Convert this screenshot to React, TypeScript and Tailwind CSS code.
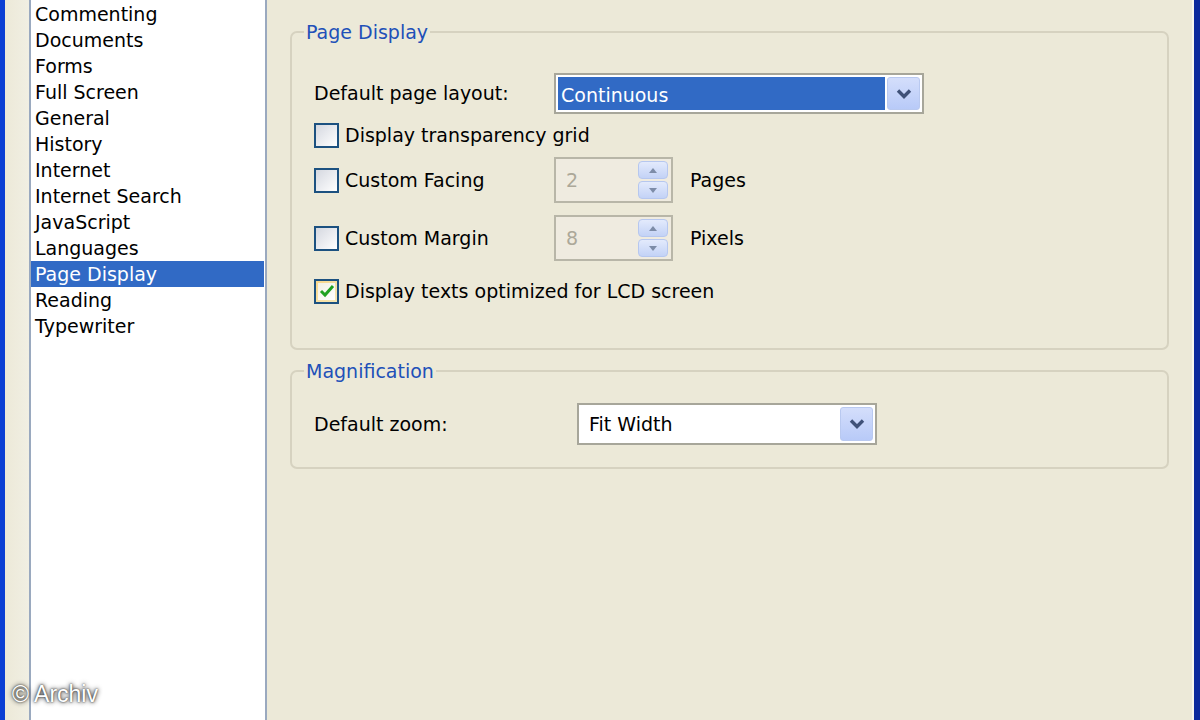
import React from "react";

const items = [
  "Commenting",
  "Documents",
  "Forms",
  "Full Screen",
  "General",
  "History",
  "Internet",
  "Internet Search",
  "JavaScript",
  "Languages",
  "Page Display",
  "Reading",
  "Typewriter",
];

function Chevron() {
  return (
    <svg width="18" height="12" viewBox="0 0 18 12">
      <path d="M3 2.5 L9 8.5 L15 2.5" fill="none" stroke="#3f5178" strokeWidth="3.4" />
    </svg>
  );
}

function DropButton() {
  return (
    <div className="w-[33px] self-stretch my-[2px] mr-[2px] flex items-center justify-center rounded-[3px] border border-[#b9c9f0] bg-gradient-to-b from-[#d4defb] to-[#b8caf8]">
      <Chevron />
    </div>
  );
}

function Checkbox({ checked = false }: { checked?: boolean }) {
  return (
    <div
      className={
        checked
          ? "w-[25px] h-[25px] shrink-0 border-2 border-[#1c5180] bg-gradient-to-br from-[#f8d68a] to-[#f5e7b6] flex items-center justify-center p-[2px]"
          : "w-[25px] h-[25px] shrink-0 border-2 border-[#1c5180] bg-gradient-to-br from-[#d5d8e0] to-white"
      }
    >
      {checked && (
        <div className="w-full h-full bg-gradient-to-br from-[#f2f0e4] to-white flex items-center justify-center">
          <svg width="16" height="14" viewBox="0 0 16 14">
            <path d="M2 7 L6 11 L14 2" fill="none" stroke="#21a121" strokeWidth="3" />
          </svg>
        </div>
      )}
    </div>
  );
}

function SpinArrow({ up }: { up: boolean }) {
  return (
    <div className="flex-1 rounded-[4px] border border-[#b6c7ef] bg-gradient-to-b from-[#e3eafc] to-[#c3d2f6] flex items-center justify-center">
      <svg width="8" height="5" viewBox="0 0 8 5">
        <path d={up ? "M0 5 L4 0 L8 5 Z" : "M0 0 L4 5 L8 0 Z"} fill="#7d8ca8" />
      </svg>
    </div>
  );
}

function Spin({ value }: { value: string }) {
  return (
    <div className="w-[119px] h-[46px] border-2 border-[#b8b6a8] bg-[#efebe0] flex items-stretch">
      <div className="flex-1 pl-[10px] flex items-center text-[#aca899]">{value}</div>
      <div className="w-[30px] flex flex-col gap-[2px] py-[2px] mr-[3px]">
        <SpinArrow up />
        <SpinArrow up={false} />
      </div>
    </div>
  );
}

export default function App() {
  return (
    <div
      className="relative w-[1200px] h-[720px] overflow-hidden bg-[#ece9d8] flex text-black text-[19px]"
      style={{ fontFamily: '"DejaVu Sans", Verdana, sans-serif' }}
    >
      <div className="w-[5px] bg-[#0b3fd4]" />
      <div className="w-[24px] bg-gradient-to-r from-[#ece9d8] to-[#f1efe3]" />
      <div className="w-[238px] bg-white border-x-2 border-[#9aa9bf] pt-[1px]">
        {items.map((it) => (
          <div
            key={it}
            className={
              it === "Page Display"
                ? "h-[26px] leading-[26px] pl-[4px] mr-[1px] bg-[#316ac5] text-white"
                : "h-[26px] leading-[26px] pl-[4px]"
            }
          >
            {it}
          </div>
        ))}
      </div>

      <div className="flex-1 flex flex-col pl-[23px] pr-[23px] pt-[19px]">
        <fieldset className="border-2 border-[#d6d2c0] rounded-[7px] pl-[22px] pr-[20px] pb-[44px] m-0">
          <legend className="-ml-[10px] px-[2px] h-[26px] leading-[26px] text-[#2150b8]">Page Display</legend>
          <div className="mt-[28px] h-[41px] flex items-center">
            <div className="w-[240px]">Default page layout:</div>
            <div className="w-[370px] h-[41px] border-2 border-[#a7a69a] bg-white flex items-stretch">
              <div className="flex-1 m-[2px] bg-[#316ac5] text-white flex items-center pl-[3px] pt-[3px]">Continuous</div>
              <DropButton />
            </div>
          </div>
          <div className="mt-[8px] h-[26px] flex items-center gap-[6px]">
            <Checkbox />
            <span>Display transparency grid</span>
          </div>
          <div className="mt-[9px] h-[46px] flex items-center">
            <div className="w-[240px] flex items-center gap-[6px]">
              <Checkbox />
              <span>Custom Facing</span>
            </div>
            <Spin value="2" />
            <span className="ml-[17px]">Pages</span>
          </div>
          <div className="mt-[12px] h-[46px] flex items-center">
            <div className="w-[240px] flex items-center gap-[6px]">
              <Checkbox />
              <span>Custom Margin</span>
            </div>
            <Spin value="8" />
            <span className="ml-[17px]">Pixels</span>
          </div>
          <div className="mt-[17px] h-[26px] flex items-center gap-[6px]">
            <Checkbox checked />
            <span>Display texts optimized for LCD screen</span>
          </div>
        </fieldset>

        <fieldset className="mt-[8px] border-2 border-[#d6d2c0] rounded-[7px] pl-[22px] pr-[20px] pb-[22px] m-0">
          <legend className="-ml-[10px] px-[2px] h-[26px] leading-[26px] text-[#2150b8]">Magnification</legend>
          <div className="mt-[19px] h-[42px] flex items-center">
            <div className="w-[263px]">Default zoom:</div>
            <div className="w-[300px] h-[42px] border-2 border-[#a7a69a] bg-white flex items-stretch">
              <div className="flex-1 flex items-center pl-[10px]">Fit Width</div>
              <DropButton />
            </div>
          </div>
        </fieldset>
      </div>

      <div className="w-[2px] bg-[#f7f6ee]" />
      <div className="w-[6px] bg-[#0c2a9c]" />

      <div
        className="absolute left-[12px] bottom-[9px] text-white text-[23px] [text-shadow:0_0_5px_rgba(0,0,0,0.95),0_0_2px_rgba(0,0,0,0.8)]"
        style={{ fontFamily: '"Liberation Sans", Arial, sans-serif' }}
      >
        © Archiv
      </div>
    </div>
  );
}
